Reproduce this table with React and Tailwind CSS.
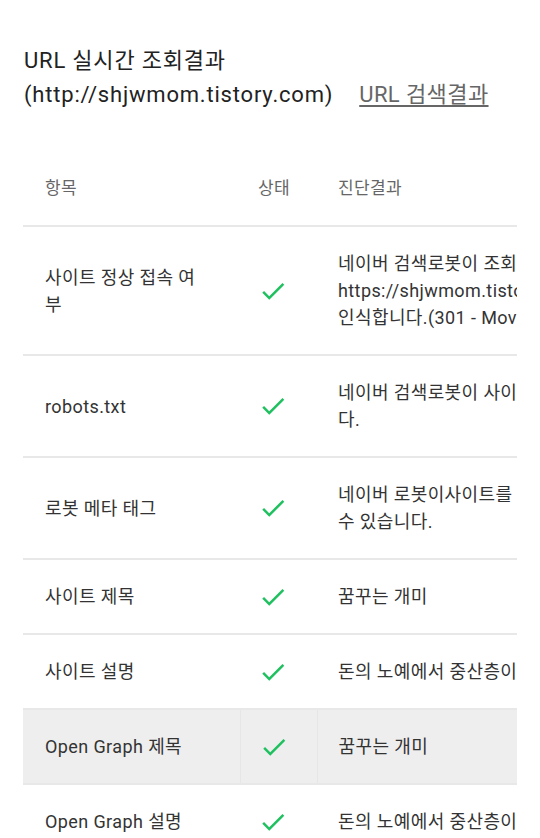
import React from "react";

const font = "font-['Roboto','Noto_Sans_CJK_KR',sans-serif]";

const rows = [
  {
    name: ["사이트 정상 접속 여", "부"],
    result: [
      "네이버 검색로봇이 조회한 결과 사이트가",
      "https://shjwmom.tistory.com/ 으로 이동된 것으로",
      "인식합니다.(301 - Moved Permanently)",
    ],
  },
  {
    name: ["robots.txt"],
    result: ["네이버 검색로봇이 사이트를 수집할 수 있습니", "다."],
  },
  {
    name: ["로봇 메타 태그"],
    result: ["네이버 로봇이사이트를 수집하고 색인할", "수 있습니다."],
  },
  { name: ["사이트 제목"], result: ["꿈꾸는 개미"] },
  { name: ["사이트 설명"], result: ["돈의 노예에서 중산층이 되기까지의 기록"] },
  { name: ["Open Graph 제목"], result: ["꿈꾸는 개미"], active: true },
  { name: ["Open Graph 설명"], result: ["돈의 노예에서 중산층이 되기까지의 기록"] },
  { name: ["Open Graph 이미지"], result: ["이미지가 정상적으로 확인됩니다."] },
];

const CheckIcon = () => (
  <div className="flex h-[27px] items-center">
    <svg width="30" height="30" viewBox="0 0 24 24" className="block shrink-0">
      <path fill="#20c060" d="M9 16.17L4.83 12l-1.42 1.41L9 19 21 7l-1.41-1.41z" />
    </svg>
  </div>
);

const App = () => {
  return (
    <div className={`${font} w-[540px] min-h-[838px] bg-white`}>
      <div className="px-[24px] pt-[44px] text-[22px] leading-[34px] tracking-[0.8px] text-[#222]">
        <div>URL 실시간 조회결과</div>
        <div>
          (http://shjwmom.tistory.com)
          <a href="#" className="ml-[26px] tracking-[0.4px] text-[#666] underline underline-offset-[3px]">
            URL 검색결과
          </a>
        </div>
      </div>

      <div className="mx-[23px] mt-[40px] overflow-hidden">
        <table className="w-[720px] border-collapse text-left text-[18px] leading-[27px] tracking-[0.4px]">
          <thead>
            <tr className="border-b-2 border-[#e8e8e8] text-[17px] text-[#666]">
              <th className="w-[217px] py-[23px] pl-[22px] font-normal">항목</th>
              <th className="w-[77px] py-[23px] pl-[18px] font-normal">상태</th>
              <th className="py-[23px] pl-[21px] font-normal">진단결과</th>
            </tr>
          </thead>
          <tbody className="text-[#333]">
            {rows.map((row, i) => (
              <tr
                key={i}
                className={`border-b-2 border-[#e8e8e8] ${row.active ? "bg-[#eeeeee]" : ""}`}
              >
                <td className={`py-[23px] pl-[22px] align-middle ${row.active ? "border-r border-[#e6e6e6]" : ""}`}>
                  {row.name.map((l, j) => (
                    <div key={j}>{l}</div>
                  ))}
                </td>
                <td className={`py-[23px] pl-[18px] align-middle ${row.active ? "border-r border-[#e6e6e6]" : ""}`}>
                  <CheckIcon />
                </td>
                <td className="py-[23px] pl-[21px] align-middle">
                  {row.result.map((l, j) => (
                    <div key={j} className="whitespace-nowrap">{l}</div>
                  ))}
                </td>
              </tr>
            ))}
          </tbody>
        </table>
      </div>
    </div>
  );
};

export default App;
